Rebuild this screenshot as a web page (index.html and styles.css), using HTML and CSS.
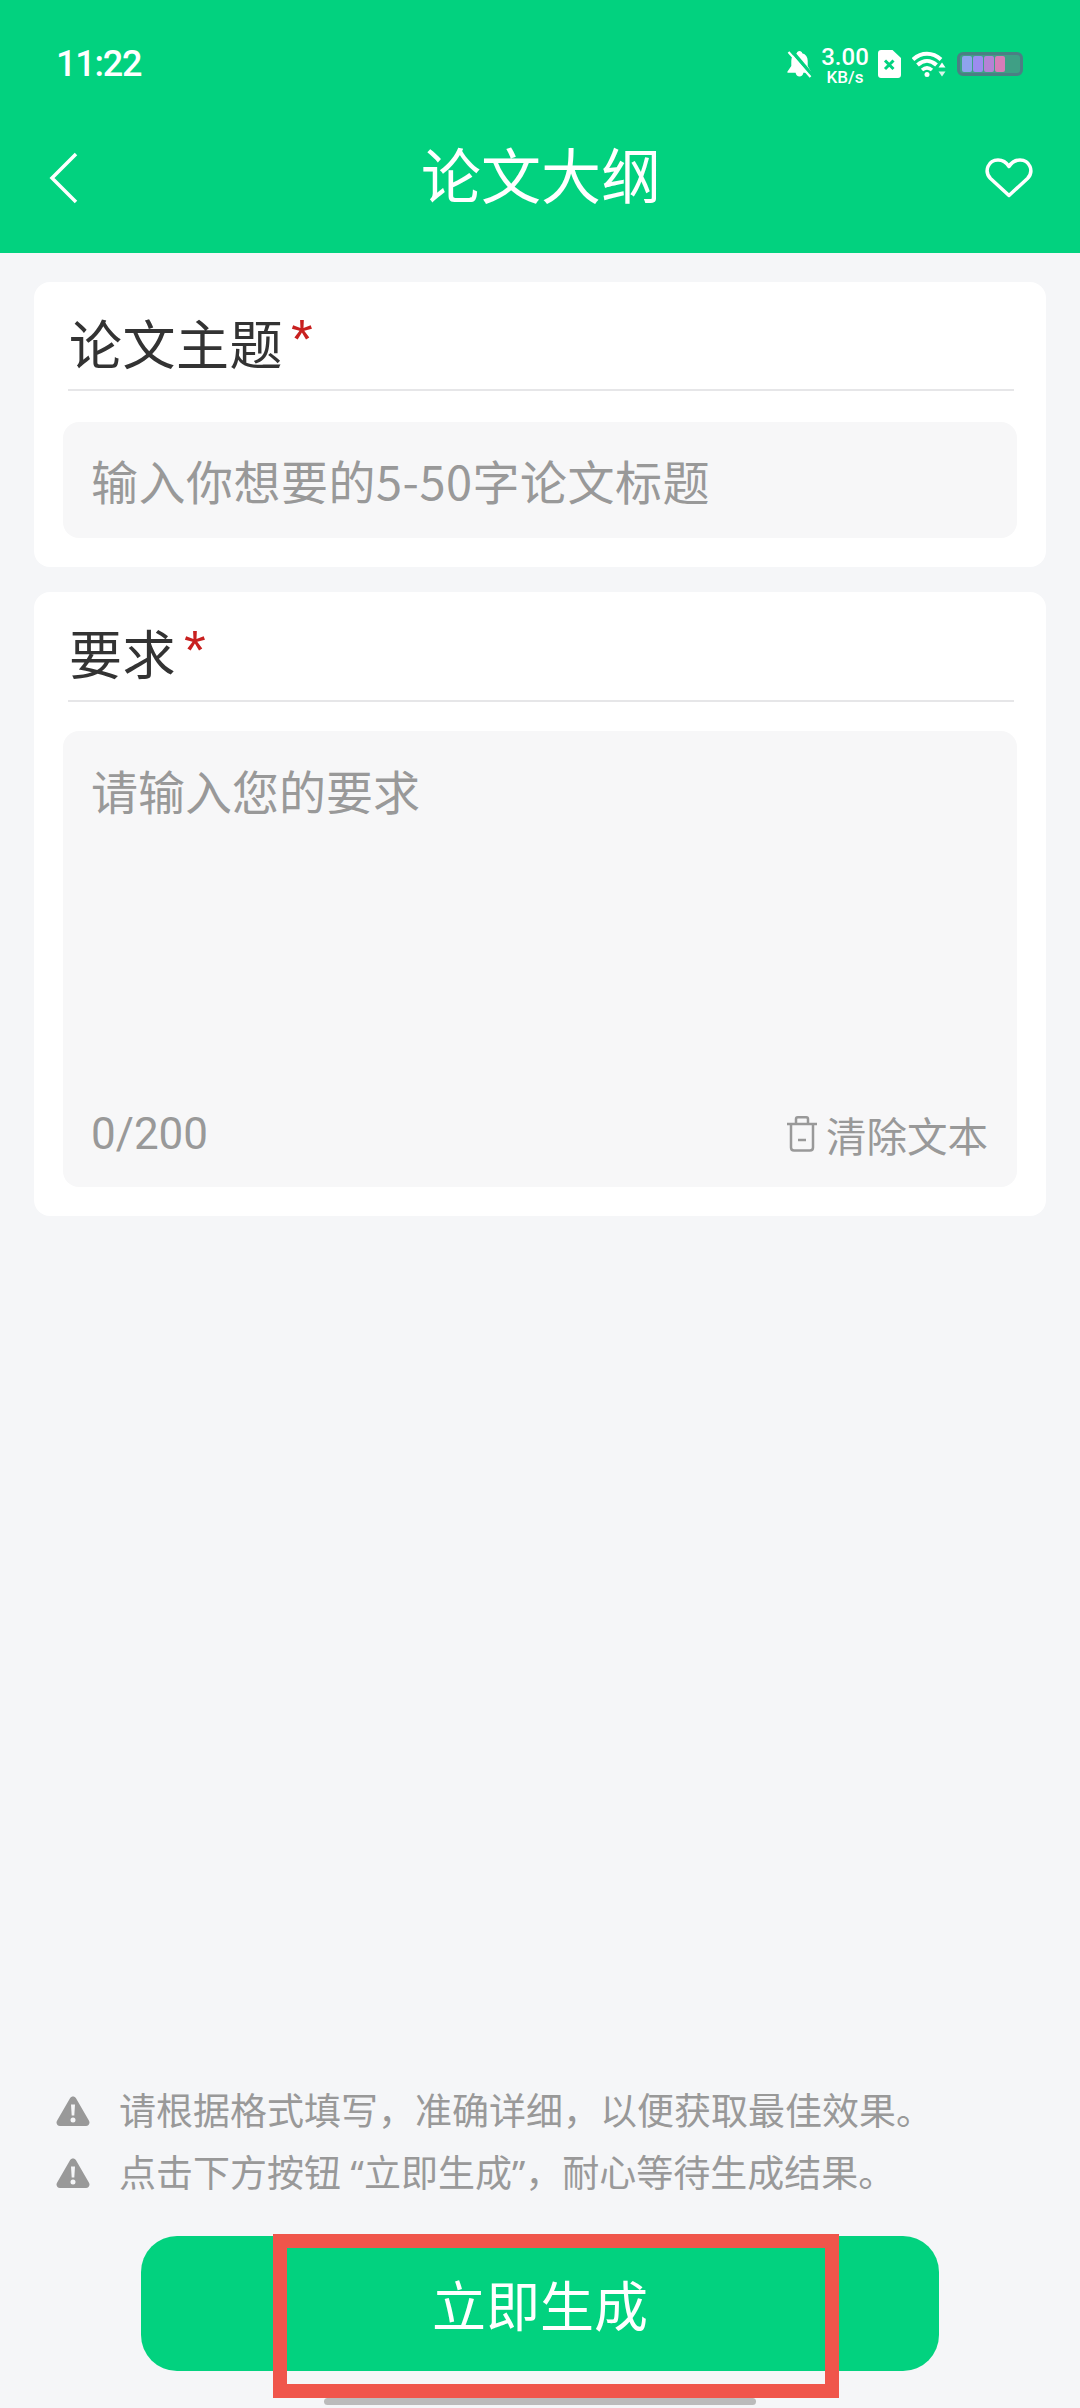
FILE: index.html
```html
<!DOCTYPE html>
<html lang="zh-CN">
<head>
  <meta charset="UTF-8" />
  <meta name="viewport" content="width=device-width, initial-scale=1.0"/>
  <title>论文大纲</title>
  <link rel="stylesheet" href="styles.css">
</head>
<body>
  <div class="page">

    <!-- Barra superior -->
    <header class="app-header">
      <div class="status-bar">
        <span class="status-time">11:22</span>
        <div class="status-icons">
          <svg class="icon-bell" viewBox="0 0 25 28" width="25" height="28">
            <path fill="#fff" d="M12.500 1c1.500 0 2.500 1 2.700 2.200 3.600 1 5.500 4 5.500 7.600v5.200l3.300 5.400c.4.800 0 1.400-.8 1.400H16.400c-.3 2.100-1.900 3.700-3.900 3.700s-3.600-1.600-3.900-3.700H1.300c-.8 0-1.200-.6-.8-1.400l3.800-5.400v-5.200c0-3.600 1.900-6.600 5.500-7.600C10 2 11 1 12.500 1z"/>
            <path stroke="#02d27f" stroke-width="3.500" d="M4 0l21 25"/>
            <path stroke="#fff" stroke-width="2.200" d="M1.500 2l22 25"/>
          </svg>
          <div class="net-speed">
            <span class="net-speed-value">3.00</span>
            <span class="net-speed-unit">KB/s</span>
          </div>
          <svg class="icon-sim" viewBox="0 0 23 28" width="23" height="28">
            <path fill="#fff" d="M3 0h11.500l8.500 8v17c0 1.700-1.300 3-3 3H3c-1.700 0-3-1.300-3-3V3c0-1.700 1.300-3 3-3z"/>
            <path stroke="#02d27f" stroke-width="3" d="M7 10.500l8.500 8.500M15.500 10.500L7 19"/>
          </svg>
          <svg class="icon-wifi" viewBox="0 0 34 26" width="34" height="26" fill="none">
            <path stroke="#fff" stroke-width="4" d="M1 8.500C9.500 .8 20.500 .8 29 8.500"/>
            <path stroke="#fff" stroke-width="4" d="M5.500 14c6-5.500 13-5.500 19 0"/>
            <path stroke="#fff" stroke-width="3.500" d="M10 19c3.200-2.800 6.800-2.800 10 0"/>
            <circle fill="#fff" cx="15" cy="23.500" r="2.500"/>
            <path fill="#fff" d="M30 11.500l3.500 5h-7z"/>
            <path fill="#d8f5e8" d="M30 25.500l-3.500-5h7z"/>
          </svg>
          <div class="battery">
            <span class="battery-cell cell-a"></span>
            <span class="battery-cell cell-b"></span>
            <span class="battery-cell cell-c"></span>
            <span class="battery-cell cell-d"></span>
          </div>
        </div>
      </div>
      <nav class="navbar">
        <svg class="icon-back" viewBox="0 0 30 52" width="30" height="52" fill="none">
          <path stroke="#fff" stroke-width="3.500" d="M27 2L3 26l24 24"/>
        </svg>
        <div class="navbar-title">论文大纲</div>
        <svg class="icon-heart" viewBox="0 0 48 40" width="48" height="40" fill="none">
          <path stroke="#fff" stroke-width="3.500" stroke-linejoin="round" d="M24 37.500L5.500 20.500C-1.500 13 3.500 2 13 2c5 0 8.500 2.500 11 6.500C26.500 4.500 30 2 35 2c9.500 0 14.500 11 7.500 18.500z"/>
        </svg>
      </nav>
    </header>

    <!-- Formulario -->
    <main class="form-area">
      <section class="card card-topic">
        <div class="card-title">论文主题<span class="required">*</span></div>
        <div class="input-box">输入你想要的5-50字论文标题</div>
      </section>

      <section class="card card-request">
        <div class="card-title">要求<span class="required">*</span></div>
        <div class="textarea-box">
          <div class="textarea-placeholder">请输入您的要求</div>
          <div class="textarea-footer">
            <span class="char-count">0/200</span>
            <span class="clear-text">
              <svg class="icon-trash" viewBox="0 0 32 36" width="32" height="36" fill="none">
                <path stroke="#999" stroke-width="2.500" d="M1 8h30M10 8V3c0-1 .8-1.700 1.700-1.700h8.600c1 0 1.700.7 1.700 1.700v5"/>
                <path stroke="#999" stroke-width="2.500" d="M5 8v23.500c0 1.800 1.300 3 3 3h16c1.700 0 3-1.200 3-3V8"/>
                <path stroke="#999" stroke-width="2.500" d="M12 24h8"/>
              </svg>
              清除文本
            </span>
          </div>
        </div>
      </section>
    </main>

    <!-- Avisos y boton -->
    <footer class="bottom-area">
      <div class="note">
        <svg class="icon-warn" viewBox="0 0 34 30" width="34" height="30">
          <path fill="#999" d="M14 2.200c1.400-2.400 4.600-2.400 6 0l13 22.500c1.400 2.400-.3 5.300-3 5.300H4c-2.700 0-4.400-2.900-3-5.300z"/>
          <path fill="#f5f6f8" d="M15 8.500h4l-.7 11h-2.600zM17 21.500a2.500 2.500 0 1 1 0 5 2.500 2.500 0 0 1 0-5z"/>
        </svg>
        <span>请根据格式填写，准确详细，以便获取最佳效果。</span>
      </div>
      <div class="note">
        <svg class="icon-warn" viewBox="0 0 34 30" width="34" height="30">
          <path fill="#999" d="M14 2.200c1.400-2.400 4.600-2.400 6 0l13 22.500c1.400 2.400-.3 5.300-3 5.300H4c-2.700 0-4.400-2.900-3-5.300z"/>
          <path fill="#f5f6f8" d="M15 8.500h4l-.7 11h-2.600zM17 21.500a2.500 2.500 0 1 1 0 5 2.500 2.500 0 0 1 0-5z"/>
        </svg>
        <span>点击下方按钮 “立即生成”，耐心等待生成结果。</span>
      </div>
      <button class="generate-btn">立即生成</button>
      <div class="home-bar"></div>
    </footer>

    <!-- Marco rojo sobre el boton -->
    <div class="highlight-box"></div>
  </div>
</body>
</html>
```

FILE: styles.css
```css
* {
  box-sizing: border-box;
}

body {
  margin: 0;
  font-family: "Noto Sans CJK SC", "Noto Sans", sans-serif;
  background: #f5f6f8;
}

.page {
  position: relative;
  width: 1080px;
  height: 2408px;
  display: flex;
  flex-direction: column;
  overflow: hidden;
  padding-bottom: 3px;
}

.app-header {
  background-color: #02d27f;
  color: #fff;
  height: 253px;
  padding-top: 14px;
}

.status-bar {
  height: 100px;
  padding: 0 57px 0 56px;
  display: flex;
  justify-content: space-between;
  align-items: center;
}

.status-time {
  font-family: Roboto, sans-serif;
  font-size: 36px;
  font-weight: 500;
  letter-spacing: -1.2px;
}

.status-icons {
  display: flex;
  align-items: center;
}

.icon-bell {
  margin-right: 10px;
}

.net-speed {
  display: flex;
  flex-direction: column;
  align-items: center;
  width: 46px;
  margin: 2px 10px 0 0;
  font-family: Roboto, sans-serif;
  font-weight: 500;
}

.net-speed-value {
  font-size: 24px;
  line-height: 24px;
}

.net-speed-unit {
  font-size: 17px;
  line-height: 17px;
}

.icon-sim {
  margin-right: 11px;
}

.icon-wifi {
  margin-right: 11px;
}

.battery {
  width: 66px;
  height: 24px;
  padding: 1px 2px;
  display: flex;
  gap: 1px;
  background-color: #3f9f85;
  border: 3px solid #4b7f84;
  border-radius: 6px;
}

.battery-cell {
  width: 10px;
  height: 100%;
  border-radius: 2px;
}

.cell-a { background-color: #8fa3ee; }
.cell-b { background-color: #9c8cf0; }
.cell-c { background-color: #b582d6; }
.cell-d { background-color: #d87cb8; }

.navbar {
  height: 122px;
  padding: 0 47px 0 49px;
  display: grid;
  grid-template-columns: 1fr auto 1fr;
  align-items: center;
}

.navbar-title {
  font-size: 60px;
  font-weight: 400;
  line-height: 1;
  margin-bottom: 4px;
}

.icon-back {
  margin-top: 5px;
}

.icon-heart {
  justify-self: end;
  margin-top: 6px;
}

.form-area {
  padding: 29px 34px 0;
  display: flex;
  flex-direction: column;
  gap: 25px;
}

.card {
  background-color: #fff;
  border-radius: 16px;
  padding: 0 29px 29px;
}

.card-title {
  margin: 0 3px 0 5px;
  padding: 12px 0 0 1px;
  height: 109px;
  display: flex;
  align-items: center;
  font-size: 53px;
  letter-spacing: .5px;
  color: #333;
  border-bottom: 2px solid #e6e6e8;
}

.required {
  font-family: "Liberation Sans", sans-serif;
  font-size: 56px;
  line-height: 1;
  color: #c8201f;
  margin-left: 8px;
  margin-bottom: 5px;
}

.input-box {
  margin-top: 31px;
  height: 116px;
  padding: 0 0 2px 28px;
  display: flex;
  align-items: center;
  font-size: 47px;
  letter-spacing: .5px;
  color: #999;
  background-color: #f7f7f8;
  border-radius: 16px;
}

.card-request .card-title {
  height: 110px;
}

.textarea-box {
  margin-top: 29px;
  height: 456px;
  padding: 26px 29px 25px 28px;
  display: flex;
  flex-direction: column;
  justify-content: space-between;
  background-color: #f7f7f8;
  border-radius: 16px;
  color: #999;
}

.textarea-placeholder {
  font-size: 47px;
  line-height: 66px;
}

.textarea-footer {
  display: flex;
  justify-content: space-between;
  align-items: center;
  height: 56px;
}

.char-count {
  font-family: Roboto, sans-serif;
  font-size: 44px;
}

.clear-text {
  display: flex;
  align-items: center;
  gap: 8px;
  font-size: 40.500px;
}

.bottom-area {
  margin-top: auto;
  display: flex;
  flex-direction: column;
}

.note {
  height: 62px;
  padding-left: 56px;
  display: flex;
  align-items: center;
  gap: 29px;
  font-family: "Noto Sans", "Noto Sans CJK SC", sans-serif;
  font-size: 37px;
  color: #999;
}

.note span {
  margin-bottom: 4px;
}

.generate-btn {
  display: block;
  width: 798px;
  height: 135px;
  margin: 32px 0 27px 141px;
  border: none;
  border-radius: 36px;
  background-color: #02d27f;
  color: #fff;
  font-family: inherit;
  font-size: 54px;
}

.home-bar {
  width: 432px;
  height: 7px;
  margin-left: 324px;
  background-color: #bbb;
  border-radius: 4px;
}

.highlight-box {
  position: absolute;
  left: 273px;
  top: 2234px;
  width: 566px;
  height: 164px;
  border: 14px solid #f0554b;
}
```
